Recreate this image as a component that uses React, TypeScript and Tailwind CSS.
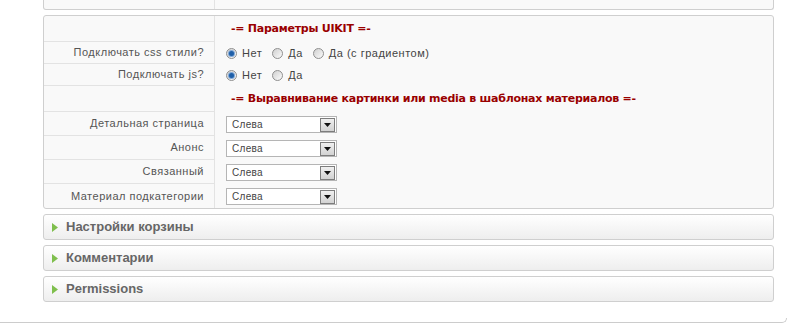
import React from "react";

const font = { fontFamily: '"Liberation Sans", Arial, sans-serif' };

function Radio({ checked }: { checked?: boolean }) {
  return (
    <span className="relative inline-flex h-[11px] w-[11px] shrink-0 items-center justify-center rounded-full border border-[#8f8f8f] bg-gradient-to-br from-[#d0d0d0] to-[#fbfbfb]">
      {checked && <span className="h-[5px] w-[5px] rounded-full bg-[#1f5fa8] ring-1 ring-[#7fa7d6]" />}
    </span>
  );
}

function RadioOpt({ label, checked }: { label: string; checked?: boolean }) {
  return (
    <span className="flex items-center gap-[5px] text-[11px] tracking-[0.5px] text-[#444]">
      <Radio checked={checked} />
      <span>{label}</span>
    </span>
  );
}

function Select() {
  return (
    <div className="mt-[1px] flex h-[17px] w-[111px] items-center justify-between border border-[#b5b5b5] bg-white pl-[5px] pr-[1px] text-[10px] tracking-[0.3px] text-[#444]">
      <span className="leading-none">Слева</span>
      <span className="flex h-[14px] w-[15px] items-center justify-center border border-[#7d7d7d] bg-gradient-to-b from-[#f0f0f0] to-[#d2d2d2]">
        <svg width="7" height="4" viewBox="0 0 7 4"><path d="M0 0h7L3.5 4z" fill="#111" /></svg>
      </span>
    </div>
  );
}

function Row({ label, h, children, last }: { label: string; h: string; children: React.ReactNode; last?: boolean }) {
  return (
    <div className={`flex ${h}`}>
      <div className={`flex w-[171px] shrink-0 items-center justify-end border-r border-[#e3e3e3] pr-[10px] text-[11px] tracking-[0.5px] text-[#555] ${last ? "" : "border-b"}`}>
        {label}
      </div>
      <div className="flex flex-1 items-center pl-[11px]">{children}</div>
    </div>
  );
}

function Header({ text }: { text: string }) {
  return (
    <span className="pl-[5px] text-[11px] font-bold tracking-[-0.25px] text-[#990000]" style={{ fontFamily: '"DejaVu Sans", Verdana, sans-serif' }}>
      {text}
    </span>
  );
}

function Accordion({ title }: { title: string }) {
  return (
    <div className="flex h-[26px] items-center rounded-[3px] border border-[#cfcfcf] bg-gradient-to-b from-white to-[#eeeeee] pl-[8px]">
      <svg width="6" height="9" viewBox="0 0 6 9" className="mr-[8px]"><path d="M0 0l6 4.5L0 9z" fill="#7fbf4d" /></svg>
      <span className="text-[13px] font-bold text-[#666]">{title}</span>
    </div>
  );
}

export default function App() {
  return (
    <div className="relative h-[335px] w-[789px] overflow-hidden bg-white" style={font}>
      <div className="ml-[43px] flex h-[10px] w-[731px] rounded-b-[3px] border border-t-0 border-[#cfcfcf] bg-[#f9f9f9]">
        <div className="w-[171px] border-r border-[#e3e3e3]" />
      </div>
      <div className="ml-[43px] mt-[5px] w-[731px] rounded-[3px] border border-[#cfcfcf] bg-[#f9f9f9]">
        <Row label="" h="h-[26px]"><Header text="-= Параметры UIKIT =-" /></Row>
        <Row label="Подключать css стили?" h="h-[22px]">
          <div className="flex items-center gap-[10px]">
            <RadioOpt label="Нет" checked />
            <RadioOpt label="Да" />
            <RadioOpt label="Да (с градиентом)" />
          </div>
        </Row>
        <Row label="Подключать js?" h="h-[22px]">
          <div className="flex items-center gap-[10px]">
            <RadioOpt label="Нет" checked />
            <RadioOpt label="Да" />
          </div>
        </Row>
        <Row label="" h="h-[26px]"><Header text="-= Выравнивание картинки или media в шаблонах материалов =-" /></Row>
        <Row label="Детальная страница" h="h-[24px]"><Select /></Row>
        <Row label="Анонс" h="h-[24px]"><Select /></Row>
        <Row label="Связанный" h="h-[24px]"><Select /></Row>
        <Row label="Материал подкатегории" h="h-[24px]" last><Select /></Row>
      </div>
      <div className="ml-[43px] mt-[5px] flex w-[731px] flex-col gap-[5px]">
        <Accordion title="Настройки корзины" />
        <Accordion title="Комментарии" />
        <Accordion title="Permissions" />
      </div>
      <div className="mt-[16px] h-[5px] w-[787px] rounded-br-[5px] border-b border-r border-[#cccccc]" />
    </div>
  );
}
